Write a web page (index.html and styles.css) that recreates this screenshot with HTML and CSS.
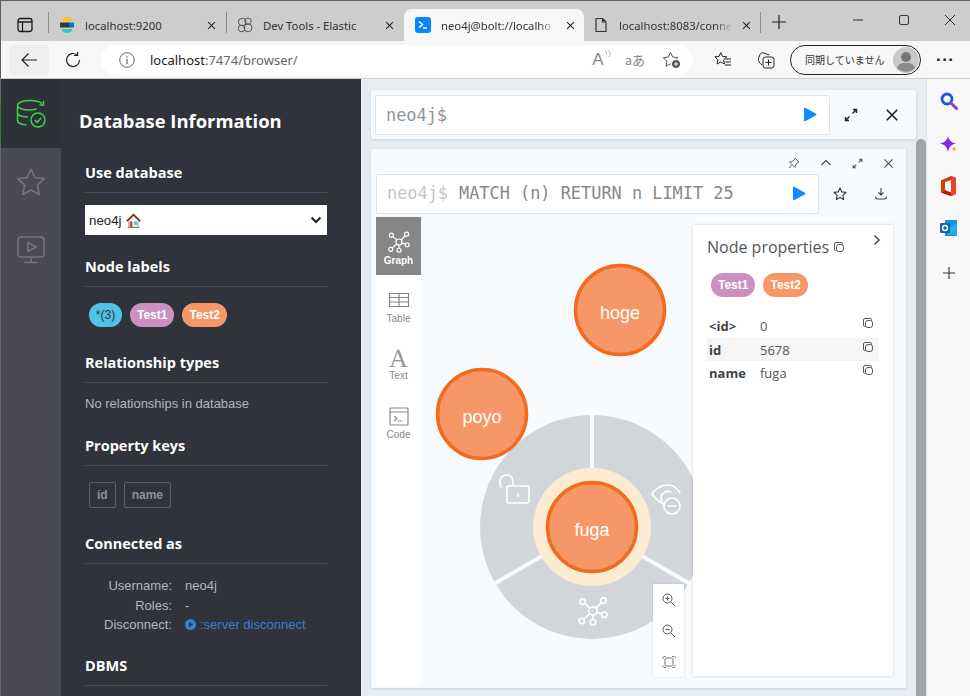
FILE: index.html
```html
<!DOCTYPE html>
<html lang="ja">
<head>
<meta charset="utf-8">
<title>neo4j@bolt://localhost:7687 - Neo4j Browser</title>
<link rel="stylesheet" href="styles.css">
</head>
<body>
<svg class="defs" width="0" height="0" aria-hidden="true">
  <symbol id="copy" viewBox="0 0 12 12"><path d="M3.5 9.5H2.8a1.3 1.3 0 0 1-1.3-1.3V3a1.5 1.5 0 0 1 1.5-1.5h5.2A1.3 1.3 0 0 1 9.5 2.8v.7" fill="none" stroke="currentColor"/><rect x="3.5" y="3.5" width="7" height="7" rx="2.4" fill="none" stroke="currentColor"/></symbol>
  <symbol id="close" viewBox="0 0 12 12"><path d="M1.5 1.5l9 9M10.5 1.5l-9 9" fill="none" stroke="currentColor" stroke-width="1.4"/></symbol>
  <symbol id="expand" viewBox="0 0 14 14"><path d="M8.5 5.5L12.5 1.5M9 1.5h3.5V5M5.5 8.5l-4 4M5 12.500H1.500V9" fill="none" stroke="currentColor" stroke-width="1.400"/></symbol>
  <symbol id="play" viewBox="0 0 14 15"><path d="M1 1.500a.8.800 0 0 1 1.200-.7L13 6.800a.8.800 0 0 1 0 1.400L2.200 14.200A.8.800 0 0 1 1 13.500z" fill="#0d8bff"/></symbol>
  <symbol id="graph" viewBox="0 0 24 24"><g fill="none" stroke="currentColor" stroke-width="1.300"><circle cx="12" cy="12" r="3.300"/><circle cx="3.700" cy="4.500" r="2.200"/><circle cx="20.300" cy="3.500" r="2.200"/><circle cx="21" cy="15" r="2.200"/><circle cx="12" cy="21" r="2.200"/><circle cx="3" cy="20" r="2.200"/><path d="M5.500 6l4 3.700M18.800 5.200l-4.500 4.600M18.900 14.500l-3.700-1.500M12 15.300v3.500M4.600 18.500l5-4.400"/></g></symbol>
</svg>

<header class="tabstrip">
  <svg class="tabstrip-icon" width="16" height="16" viewBox="0 0 16 16"><rect x="1" y="1.500" width="14" height="13" rx="2.500" fill="none" stroke="#1c1c1c" stroke-width="1.300"/><path d="M1 5h14M5.500 5v9" stroke="#1c1c1c" stroke-width="1.300"/></svg>
  <i class="tab-sep"></i>
  <div class="tab">
    <svg class="fav" width="16" height="16" viewBox="0 0 16 16"><path d="M2.500 4a5.500 4 0 0 1 11 0z" fill="#fec514"/><path d="M1 5.500h9a2.500 2.500 0 0 1 0 5H1z" fill="#343741"/><path d="M10 5.500h5v5h-5z" fill="#07c"/><path d="M2.500 12h11a5.500 4 0 0 1-11 0z" fill="#3ec4b4"/></svg>
    <span class="tab-title">localhost:9200</span>
    <svg class="tab-close"><use href="#close"/></svg>
  </div>
  <i class="tab-sep"></i>
  <div class="tab">
    <svg class="fav" width="16" height="16" viewBox="0 0 16 16"><g fill="none" stroke="#555" stroke-width="1"><circle cx="5.200" cy="5" r="3.800"/><circle cx="11" cy="4.200" r="3.200"/><circle cx="11" cy="10.800" r="4"/><circle cx="4.600" cy="11.500" r="3.300"/></g></svg>
    <span class="tab-title">Dev Tools - Elastic</span>
    <svg class="tab-close"><use href="#close"/></svg>
  </div>
  <div class="tab tab-active">
    <svg class="fav" width="16" height="16" viewBox="0 0 16 16"><rect width="16" height="16" rx="3" fill="#0a84ff"/><path d="M4 4.500L7.500 7.500L4 10.500M8 11h4" fill="none" stroke="#fff" stroke-width="1.500"/></svg>
    <span class="tab-title tab-fade">neo4j@bolt://localho</span>
    <svg class="tab-close"><use href="#close"/></svg>
  </div>
  <div class="tab">
    <svg class="fav" width="16" height="16" viewBox="0 0 16 16"><path d="M3 1.500h6.500L13 5v9.500H3zM9.500 1.500V5H13" fill="none" stroke="#333" stroke-width="1.200" stroke-linejoin="round"/></svg>
    <span class="tab-title tab-fade">localhost:8083/conne</span>
    <svg class="tab-close"><use href="#close"/></svg>
  </div>
  <i class="tab-sep"></i>
  <svg class="tab-plus" width="16" height="16" viewBox="0 0 16 16"><path d="M8 1v14M1 8h14" stroke="#222" stroke-width="1.200"/></svg>
  <div class="window-controls">
    <svg width="12" height="12" viewBox="0 0 12 12"><path d="M1 6h10" stroke="#333"/></svg>
    <svg width="12" height="12" viewBox="0 0 12 12"><rect x="1.500" y="1.500" width="9" height="9" rx="1.500" fill="none" stroke="#333"/></svg>
    <svg width="12" height="12" viewBox="0 0 12 12"><path d="M1 1l10 10M11 1L1 11" stroke="#333"/></svg>
  </div>
</header>

<nav class="toolbar">
  <div class="tool-btn tool-back"><svg width="18" height="16" viewBox="0 0 18 16"><path d="M17 8H2M8.500 1.500L2 8l6.500 6.500" fill="none" stroke="#222" stroke-width="1.200"/></svg></div>
  <div class="tool-btn"><svg width="18" height="18" viewBox="0 0 18 18"><path d="M15.500 9A6.500 6.500 0 1 1 13 3.900M13.600 1v3.500h-3.500" fill="none" stroke="#222" stroke-width="1.200"/></svg></div>
  <div class="address">
    <svg width="16" height="16" viewBox="0 0 16 16"><circle cx="8" cy="8" r="7.300" fill="none" stroke="#666"/><path d="M8 7v5M8 4.200v1.300" stroke="#666" stroke-width="1.200"/></svg>
    <span class="url"><b>localhost</b>:7474/browser/</span>
    <span class="address-tools">
      <span class="read-aloud">A<svg width="7" height="8" viewBox="0 0 7 8"><path d="M1 1c2 1 2 3 1 4M3.500 0c3 2 3 5 1.500 7" fill="none" stroke="#999" stroke-width=".8"/></svg></span>
      <span class="translate">aあ</span>
      <svg width="20" height="18" viewBox="0 0 20 18"><path d="M8.500 1.500l2.200 4.500 5 .7-3.600 3.500.9 5-4.500-2.400-4.500 2.400.9-5L1.300 6.700l5-.7z" fill="none" stroke="#555" stroke-linejoin="round"/><circle cx="14" cy="13" r="4.500" fill="#555" stroke="#fff"/><path d="M12 13h4M14 11v4" stroke="#fff"/></svg>
    </span>
  </div>
  <svg class="tool-icon fav-list" width="18" height="18" viewBox="0 0 18 18"><path d="M6.800 1.500l1.800 3.900 4.200.5-3.100 2.900.8 4.200-3.700-2.100-3.700 2.100.8-4.200L.8 5.900 5 5.400zM11.500 8h5.500M11.500 11h5.500M11 14h6" fill="none" stroke="#222"/></svg>
  <svg class="tool-icon collections" width="18" height="18" viewBox="0 0 18 18"><path d="M5 14C2.500 12 1 10 1.500 7.500L3 3.500c.5-1.500 2-2 3.500-1.500l6 2" fill="none" stroke="#222"/><rect x="6" y="6" width="11" height="11" rx="2.500" fill="none" stroke="#222"/><path d="M11.500 8.500v6M8.500 11.500h6" stroke="#222"/></svg>
  <div class="profile">
    <span class="profile-text">同期していません</span>
    <svg width="26" height="26" viewBox="0 0 26 26"><circle cx="13" cy="13" r="13" fill="#c8c8c8"/><circle cx="13" cy="10" r="5" fill="#777"/><path d="M4 21c2-5 5-5 9-5s7 0 9 5a13 13 0 0 1-18 0z" fill="#8a8a8a"/></svg>
  </div>
  <span class="more">&middot;&middot;&middot;</span>
</nav>

<div class="app">
  <aside class="rail">
    <div class="rail-item rail-active">
      <svg width="30" height="30" viewBox="0 0 30 30"><g fill="none" stroke="#3ed44e" stroke-width="1.500"><path d="M1.500 6.500C1.500 3 8 1.500 14 1.500c4 0 9 .8 12 3M1.500 6.500v15c0 2.500 4.500 4 9 4.500M1.500 14c0 2.500 5 4 10.500 4M1.500 6.500c0 2.500 5.500 4.500 12 4.500 2.500 0 5-.3 7-1M27.500 2v4h-4"/><circle cx="22" cy="21" r="7"/><path d="M18.800 21l2.300 2.300 4-4.300"/></g></svg>
    </div>
    <div class="rail-item">
      <svg width="30" height="30" viewBox="0 0 30 30"><path d="M15 2l4 8.600 9.200 1.200-6.800 6.400 1.800 9.300L15 23l-8.200 4.500 1.800-9.300L1.800 11.800 11 10.600z" fill="none" stroke="#75757c" stroke-width="1.600" stroke-linejoin="round"/></svg>
    </div>
    <div class="rail-item">
      <svg width="30" height="30" viewBox="0 0 30 30"><rect x="2" y="2" width="26" height="20" rx="3" fill="none" stroke="#75757c" stroke-width="1.600"/><path d="M12 7.500l8 4.500-8 4.500zM15 22v5M8 27.500h14" fill="none" stroke="#75757c" stroke-width="1.600" stroke-linejoin="round"/></svg>
    </div>
  </aside>

  <section class="drawer">
    <h1 class="drawer-title">Database Information</h1>

    <h2 class="sec-head">Use database</h2>
    <div class="fake-select">
      <span>neo4j</span>
      <svg class="home" width="15" height="15" viewBox="0 0 14 14"><path d="M2.500 6.500v7h9v-7L7 2.500z" fill="#e6eef2" stroke="#8a6a5a" stroke-width=".5"/><path d="M.8 7.500L7 1.500l6.200 6" fill="none" stroke="#7c2d1e" stroke-width="1.600"/><rect x="3.500" y="8" width="2.500" height="5.500" fill="#d8483a"/><rect x="7.500" y="8" width="3" height="3" fill="#66b7e0"/><path d="M1.500 13.500h11" stroke="#4a9a4a" stroke-width="1"/></svg>
      <svg class="chev" width="12" height="8" viewBox="0 0 12 8"><path d="M1.500 1.500L6 6l4.500-4.500" fill="none" stroke="#222" stroke-width="2"/></svg>
    </div>

    <h2 class="sec-head sec-a">Node labels</h2>
    <div class="pills pills-drawer">
      <span class="pill pill-all">*(3)</span>
      <span class="pill pill-test1">Test1</span>
      <span class="pill pill-test2">Test2</span>
    </div>

    <h2 class="sec-head sec-b">Relationship types</h2>
    <p class="muted">No relationships in database</p>

    <h2 class="sec-head sec-c">Property keys</h2>
    <div class="keys"><span class="key">id</span><span class="key">name</span></div>

    <h2 class="sec-head sec-b">Connected as</h2>
    <dl class="conn">
      <dt>Username:</dt><dd>neo4j</dd>
      <dt>Roles:</dt><dd>-</dd>
      <dt>Disconnect:</dt>
      <dd class="link"><svg width="11" height="11" viewBox="0 0 11 11"><circle cx="5.500" cy="5.500" r="5.500" fill="#3b7fd0"/><path d="M4 2.800l4 2.700-4 2.700z" fill="#2f3138"/></svg><span>:server disconnect</span></dd>
    </dl>

    <h2 class="sec-head sec-d">DBMS</h2>
  </section>

  <main class="stage">
    <div class="frame-editor">
      <div class="cmd cmd-top">
        <span class="prompt">neo4j$</span>
        <svg class="run" width="14" height="15"><use href="#play"/></svg>
      </div>
      <div class="frame-actions">
        <svg width="14" height="14" class="ico-dark"><use href="#expand"/></svg>
        <svg width="14" height="14" class="ico-dark"><use href="#close"/></svg>
      </div>
    </div>

    <article class="frame">
      <div class="frame-bar">
        <svg width="12" height="12" viewBox="0 0 12 12"><path d="M7 1l4 4-1.500.5L7.500 8 7 10.500 1.500 5 4 4.500 6.500 2.500zM3.500 8L1 11" fill="none" stroke="#555" stroke-width=".9"/></svg>
        <svg width="12" height="12" viewBox="0 0 12 12"><path d="M1.500 8L6 3.500 10.500 8" fill="none" stroke="#444" stroke-width="1.100"/></svg>
        <svg width="11" height="11" class="ico-mid"><use href="#expand"/></svg>
        <svg width="11" height="11" class="ico-mid"><use href="#close"/></svg>
      </div>
      <div class="frame-cmd">
        <div class="cmd cmd-query">
          <span class="prompt prompt-light">neo4j$</span><span class="query">MATCH (n) RETURN n LIMIT 25</span>
          <svg class="run" width="14" height="15"><use href="#play"/></svg>
        </div>
        <svg class="cmd-act" width="14" height="14" viewBox="0 0 14 14"><path d="M7 1l1.800 3.900 4.200.5-3.100 2.900.8 4.200L7 10.400l-3.700 2.100.8-4.200L1 5.400l4.200-.5z" fill="none" stroke="#333" stroke-width="1.100" stroke-linejoin="round"/></svg>
        <svg class="cmd-act" width="14" height="14" viewBox="0 0 14 14"><path d="M7 1v7M4.500 5.500L7 8l2.500-2.500M1.500 9.500c0 2 1 2.500 2 2.500h7c1 0 2-.5 2-2.500" fill="none" stroke="#444" stroke-width="1.100"/></svg>
      </div>
      <div class="result">
        <div class="views">
          <div class="view view-active">
            <svg width="22" height="22"><use href="#graph"/></svg><span>Graph</span>
          </div>
          <div class="view view-table">
            <svg width="22" height="18" viewBox="0 0 22 18"><path d="M1.500 2.500h19v13h-19zM1.500 6.500h19M1.500 11h19M11 2.500v13" fill="none" stroke="#888" stroke-width="1.200"/></svg><span>Table</span>
          </div>
          <div class="view view-text">
            <span class="glyph">A</span><span>Text</span>
          </div>
          <div class="view view-code">
            <svg width="20" height="19" viewBox="0 0 20 19"><rect x="1" y="1" width="18" height="17" rx="1" fill="none" stroke="#888" stroke-width="1.200"/><path d="M1 5h18M5 9l3 2.500L5 14M9 14h4" fill="none" stroke="#888" stroke-width="1.100"/></svg><span>Code</span>
          </div>
        </div>
        <div class="canvas">
          <svg class="graph-svg" width="485" height="469" viewBox="0 0 485 469">
            <g transform="translate(171 310)">
              <circle r="112" fill="#d2d5da"/>
              <path d="M0-114V-58M50 29L100 58M-50 29L-100 58" stroke="#f8fbfe" stroke-width="4"/>
              <circle r="59" fill="#f9ecd1"/>
              <circle r="44.500" fill="#f79767" stroke="#f46a1f" stroke-width="3.500"/>
            </g>
            <circle cx="199" cy="93" r="44.500" fill="#f79767" stroke="#f46a1f" stroke-width="3.500"/>
            <circle cx="61" cy="197" r="44.500" fill="#f79767" stroke="#f46a1f" stroke-width="3.500"/>
            <g fill="none" stroke="#fff" stroke-width="1.600" stroke-linecap="round">
              <rect x="86" y="269" width="22" height="17" rx="2"/>
              <path d="M80 270c-3-6 0-12 6-12s6 5 6 10M97 277v2.500"/>
              <path d="M231 277c4-6 10-9 16-9s9 3 12 8M231 277c3 5 8 8 11 10M250 275c-5-2-10 1-10 6 0 1 0 2 1 3"/>
              <circle cx="251" cy="289" r="8"/>
              <path d="M247 289h8"/>
            </g>
            <g class="ring-graph" transform="translate(157 379) scale(1.250)"><use href="#graph" width="24" height="24"/></g>
            <text class="node-text" x="199" y="102">hoge</text>
            <text class="node-text" x="61" y="206">poyo</text>
            <text class="node-text" x="171" y="319">fuga</text>
          </svg>
          <div class="zoom">
            <svg width="14" height="14" viewBox="0 0 14 14"><g fill="none" stroke="#555"><circle cx="5.500" cy="5.500" r="4.500"/><path d="M9 9l4 4M3.500 5.500h4M5.500 3.500v4"/></g></svg>
            <svg width="14" height="14" viewBox="0 0 14 14"><g fill="none" stroke="#555"><circle cx="5.500" cy="5.500" r="4.500"/><path d="M9 9l4 4M3.500 5.500h4"/></g></svg>
            <svg width="14" height="14" viewBox="0 0 14 14"><g fill="none" stroke="#777"><rect x="3" y="3" width="8" height="8" rx="1.500"/><path d="M1 4V1.500h3M10 1.500h3V4M13 10v2.500h-3M4 12.500H1V10" stroke-dasharray="2 1"/></g></svg>
          </div>
          <div class="panel">
            <div class="panel-head">
              <span class="panel-title">Node properties</span>
              <svg class="copy-title" width="12" height="12"><use href="#copy"/></svg>
              <svg class="panel-chev" width="8" height="12" viewBox="0 0 8 12"><path d="M1.500 1.500L6 6l-4.500 4.500" fill="none" stroke="#555" stroke-width="1.600"/></svg>
            </div>
            <div class="pills pills-panel">
              <span class="pill pill-test1">Test1</span>
              <span class="pill pill-test2">Test2</span>
            </div>
            <div class="props">
              <div class="prop"><b>&lt;id&gt;</b><span>0</span><svg width="12" height="12"><use href="#copy"/></svg></div>
              <div class="prop prop-alt"><b>id</b><span>5678</span><svg width="12" height="12"><use href="#copy"/></svg></div>
              <div class="prop"><b>name</b><span>fuga</span><svg width="12" height="12"><use href="#copy"/></svg></div>
            </div>
          </div>
        </div>
      </div>
    </article>
    <div class="scrollbar"></div>
  </main>

  <aside class="edge">
    <svg width="18" height="18" viewBox="0 0 18 18"><circle cx="7" cy="7" r="5" fill="none" stroke="#2456d6" stroke-width="2.800"/><path d="M11 11l5.500 5.500" stroke="#8a3fd1" stroke-width="3" stroke-linecap="round"/></svg>
    <svg class="edge-copilot" width="18" height="18" viewBox="0 0 18 18"><path d="M8 0c1 4 3 6.500 8 7.500-5 1-7 3.500-8 8.500-1-5-3-7.500-8-8.500 5-1 7-3.500 8-7.500z" fill="#7a2fe0"/><path d="M14 10c.3 2 1 2.700 3.500 3-2.500.3-3.200 1-3.500 3.500-.3-2.500-1-3.200-3-3.500 2-.3 2.700-1 3-3z" fill="#f5b021"/></svg>
    <svg class="edge-office" width="17" height="20" viewBox="0 0 17 20"><path d="M1 4.500L11 0l5 2v16l-5 2-10-3.500 10 1V4L5 6v8l-4 2.500z" fill="#d83b01"/><path d="M11 0l5 2v16l-5 2z" fill="#e8442a"/><path d="M1 16.500L5 14l6 2.500V20z" fill="#b7140b"/></svg>
    <svg class="edge-outlook" width="17" height="18" viewBox="0 0 17 18"><rect x="5" y="1" width="12" height="16" rx="1" fill="#1490df"/><path d="M8 9l9-5v12H8z" fill="#28a8ea"/><rect x="0" y="4" width="10" height="10" rx="1" fill="#0f62ae"/><circle cx="5" cy="9" r="2.500" fill="none" stroke="#fff" stroke-width="1.400"/></svg>
    <svg class="edge-plus" width="14" height="14" viewBox="0 0 14 14"><path d="M7 1v12M1 7h12" stroke="#333" stroke-width="1.100"/></svg>
  </aside>
</div>
</body>
</html>
```
FILE: styles.css
```css
* { box-sizing: border-box; }
html, body { margin: 0; height: 100%; }
body {
  width: 970px; height: 696px; overflow: hidden;
  display: flex; flex-direction: column;
  font-family: "Liberation Sans", Arial, sans-serif;
  background: #f7f7f7;
}
.defs { position: absolute; }

/* Browser tab strip */
.tabstrip {
  height: 41px; flex: none;
  display: flex; align-items: flex-end;
  background: #cdcdcd;
  border-top: 1px solid #5e5e5e; border-left: 1px solid #5e5e5e;
  font-family: "Noto Sans", sans-serif; font-size: 11.300px; color: #333;
}
.tabstrip-icon { margin: 0 15px 8px 16px; }
.tab-sep { width: 1px; height: 21px; background: #8b8b8b; margin-bottom: 8px; }
.tab {
  width: 177px; height: 32px; flex: none;
  display: flex; align-items: center;
  padding: 0 10px 0 10px;
}
.tab-active { width: 180px; background: #f7f7f7; border-radius: 8px 8px 0 0; padding-left: 11px; padding-right: 9px; }
.tab-active + .tab { width: 176px; padding-left: 9px; }
.fav { flex: none; margin-right: 10px; }
.tab-title { flex: 1; white-space: nowrap; }
.tab-fade { -webkit-mask-image: linear-gradient(90deg, #000 85%, transparent 100%); mask-image: linear-gradient(90deg, #000 85%, transparent 100%); }
.tab-close { width: 9px; height: 9px; flex: none; color: #222; margin-left: 10px; }
.tab-plus { margin: 0 0 11px 10px; }
.window-controls { margin-left: auto; display: flex; gap: 34px; padding: 0 14px 15px 0; }

/* Browser toolbar */
.toolbar {
  height: 38px; flex: none;
  display: flex; align-items: center;
  background: #f7f7f7; border-bottom: 1px solid #cfcfcf; border-left: 1px solid #5e5e5e;
  padding-left: 8px;
}
.tool-btn { width: 40px; height: 30px; display: flex; align-items: center; justify-content: center; border-radius: 4px; margin-right: 4px; }
.tool-back { background: #efefef; margin-right: 4px; }
.address {
  width: 592px; height: 30px; margin-left: 4px;
  background: #fff; border-radius: 15px;
  display: flex; align-items: center;
  padding-left: 18px;
  font-family: "Noto Sans", sans-serif;
}
.url { margin-left: 15px; font-size: 13px; color: #666; }
.url b { font-weight: 400; color: #222; }
.address-tools { margin-left: auto; display: flex; align-items: center; gap: 17px; padding-right: 11px; color: #888; }
.read-aloud { font-size: 17px; font-family: "Liberation Sans", sans-serif; display: flex; align-items: flex-start; margin-right: -3px; }
.translate { font: 13px "Noto Sans CJK JP", sans-serif; }
.tool-icon { flex: none; }
.fav-list { margin-left: 21px; }
.collections { margin-left: 25px; }
.profile {
  width: 131px; height: 30px; margin-left: 15px;
  border: 1px solid #222; border-radius: 15px;
  display: flex; align-items: center; justify-content: space-between;
  padding: 0 1px 0 14px;
  font: 10px "Noto Sans CJK JP", sans-serif; color: #333;
}
.more { margin-left: 15px; font: 700 17px "Liberation Sans", sans-serif; color: #222; letter-spacing: .5px; }

/* App */
.app { flex: 1; min-height: 0; display: flex; }
.rail {
  width: 61px; flex: none;
  background: linear-gradient(#66666c, #66666c) 0 0 / 1px 100% no-repeat, #4a4a55;
}
.rail-item { height: 68px; display: flex; align-items: center; justify-content: center; padding-left: 1px; }
.rail-active {
  height: 69px;
  background:
    linear-gradient(#3a7d2c, #3a7d2c) 0 23px / 1px 41px no-repeat,
    linear-gradient(#66666c, #66666c) 0 0 / 1px 100% no-repeat,
    #2f3138;
}

.drawer {
  width: 300px; flex: none; height: 100%; overflow: hidden;
  background: #30333b; color: #fff;
  padding: 0 34px 0 24px;
  font-family: "Open Sans", sans-serif;
}
.drawer-title { margin: 27px 0 0 -6px; height: 30px; font-size: 18.400px; line-height: 30px; font-weight: 700; color: #fff; }
.sec-head {
  margin: 24px 0 0; height: 33px; padding-top: 3px;
  font-size: 14.500px; line-height: 20px; font-weight: 700;
  border-bottom: 1px solid #484b53;
}
.sec-a { margin-top: 19px; }
.sec-b { margin-top: 23px; }
.sec-c { margin-top: 21px; }
.sec-d { margin-top: 18px; }

.fake-select {
  margin-top: 12px; height: 30px; background: #fff;
  display: flex; align-items: center; gap: 4px; padding: 0 5px 0 4px;
  font: 13.300px "Liberation Sans", sans-serif; color: #222;
}
.chev { margin-left: auto; }

.pills { display: flex; gap: 8px; font-family: "Liberation Sans", sans-serif; }
.pills-drawer { margin: 16px 0 0 4px; }
.pill { height: 24px; padding: 0 7px; border-radius: 12px; font-size: 12px; line-height: 24px; font-weight: 700; color: #fff; }
.pill-all { background: #4fc3e6; color: #2f3138; font-weight: 400; width: 33px; padding: 0; text-align: center; }
.pill-test1 { background: #c990c0; }
.pill-test2 { background: #f79767; }

.muted { margin: 13px 0 0; height: 16px; font: 13px/16px "Liberation Sans", sans-serif; color: #b5b7bc; }

.keys { display: flex; gap: 8px; margin: 16px 0 0 4px; }
.key {
  height: 26px; padding: 0 7px; border: 1px solid #5c5f67; border-radius: 2px;
  font: 700 12px/24px "Liberation Sans", sans-serif; color: #8e9096;
}

.conn {
  margin: 12px 0 0; display: grid;
  grid-template-columns: 87px 1fr; column-gap: 13px; row-gap: 0;
  font: 13px/19.500px "Liberation Sans", sans-serif; color: #b5b7bc;
}
.conn dt { text-align: right; }
.conn dd { margin: 0; }
.link { color: #3b7fd0; display: flex; align-items: center; gap: 4px; }

/* Neo4j main area */
.stage {
  flex: 1; min-width: 0; position: relative;
  background: #e6eef4;
  padding: 11px 10px 0;
  overflow: hidden;
}
.frame-editor {
  height: 49px;
  background: #f8fbfe; border-radius: 2px;
  box-shadow: 0 1px 3px rgba(40,60,80,.18);
  display: flex; align-items: center; padding: 0 0 0 4px;
}
.cmd {
  height: 40px; background: #fff; border: 1px solid #d9e4ee; border-radius: 2px;
  display: flex; align-items: center;
  font-family: "DejaVu Sans Mono", monospace; font-size: 16.900px;
  padding-left: 10px;
}
.cmd-top { width: 455px; }
.cmd-query { width: 443px; padding-bottom: 2px; }
.run { margin-left: auto; margin-right: 12px; }
.prompt { color: #8e959c; }
.prompt-light { color: #c3c6cb; }
.query { color: #888; margin-left: 11px; }
.frame-actions { display: flex; align-items: center; gap: 27px; margin-left: 14px; }
.ico-dark { color: #222; }
.ico-mid { color: #555; }

.frame {
  width: 535px; height: 539px; margin-top: 10px;
  background: #f8fbfe; border-radius: 2px;
  box-shadow: 0 1px 3px rgba(40,60,80,.18);
  padding: 0 5px;
  display: flex; flex-direction: column;
}
.frame-bar { height: 25px; flex: none; display: flex; align-items: center; justify-content: flex-end; gap: 20px; padding: 3px 7px 0 0; }
.frame-cmd { display: flex; align-items: center; }
.cmd-act { margin-left: 27px; }
.frame-cmd .cmd + .cmd-act { margin-left: 14px; }
.result { flex: 1; min-height: 0; margin: 3px -5px 2px 0; display: flex; }
.views { width: 45px; flex: none; background: #fff; font: 10px/12px "Liberation Sans", sans-serif; color: #888; }
.view { display: flex; flex-direction: column; align-items: center; }
.view-active { height: 58px; background: #868686; color: #fff; font-weight: 700; padding-top: 14px; }
.view-active svg { margin-bottom: 2px; }
.view-table { height: 59px; padding-top: 16px; }
.view-table svg { margin-bottom: 4px; }
.view-text { height: 63px; padding-top: 13px; }
.glyph { font: 26px/23px "Liberation Serif", serif; height: 23px; color: #999; }
.view-code { padding-top: 10px; }
.view-code svg { margin-bottom: 3px; }

.canvas { flex: 1; position: relative; overflow: hidden; }
.graph-svg { position: absolute; left: 0; top: 0; }
.node-text { font: 18px "Liberation Sans", sans-serif; fill: #fff; text-anchor: middle; }
.ring-graph { color: #fff; }
.zoom {
  position: absolute; left: 232px; top: 367px; width: 31px; height: 93px;
  background: #fff; box-shadow: 0 0 2px rgba(0,0,0,.15);
  display: flex; flex-direction: column; align-items: center; justify-content: space-around;
}
.panel {
  position: absolute; left: 272px; top: 8px; width: 200px; height: 451px;
  background: #fff; box-shadow: 0 0 3px rgba(40,60,80,.2);
  padding: 0 14px; font-family: "Open Sans", sans-serif; color: #555;
}
.panel-head { height: 44px; display: flex; align-items: center; position: relative; }
.panel-title { font-size: 16px; }
.copy-title { margin-left: 4px; color: #555; }
.panel-chev { position: absolute; right: -2px; top: 9px; }
.pills-panel { margin: 4px 0 0 4px; }
.props { margin-top: 17px; font-size: 13px; }
.prop { height: 23.500px; display: flex; align-items: center; padding-left: 2px; position: relative; }
.prop b { width: 51px; color: #3f4149; }
.prop svg { position: absolute; right: 5px; top: 3px; color: #555; }
.prop-alt { background: #f5f5f5; padding-top: 1px; }

.scrollbar {
  position: absolute; right: 0; top: 60px; bottom: 0; width: 10px;
  background: #a1a5aa; border-radius: 5px 5px 0 0;
}

.edge {
  width: 44px; flex: none; background: #f7f7f7; border-left: 1px solid #e3e3e3;
  display: flex; flex-direction: column; align-items: center;
  padding-top: 13px;
}
.edge-copilot { margin-top: 26px; }
.edge-office { margin-top: 22px; }
.edge-outlook { margin-top: 23px; }
.edge-plus { margin-top: 29px; }
```
